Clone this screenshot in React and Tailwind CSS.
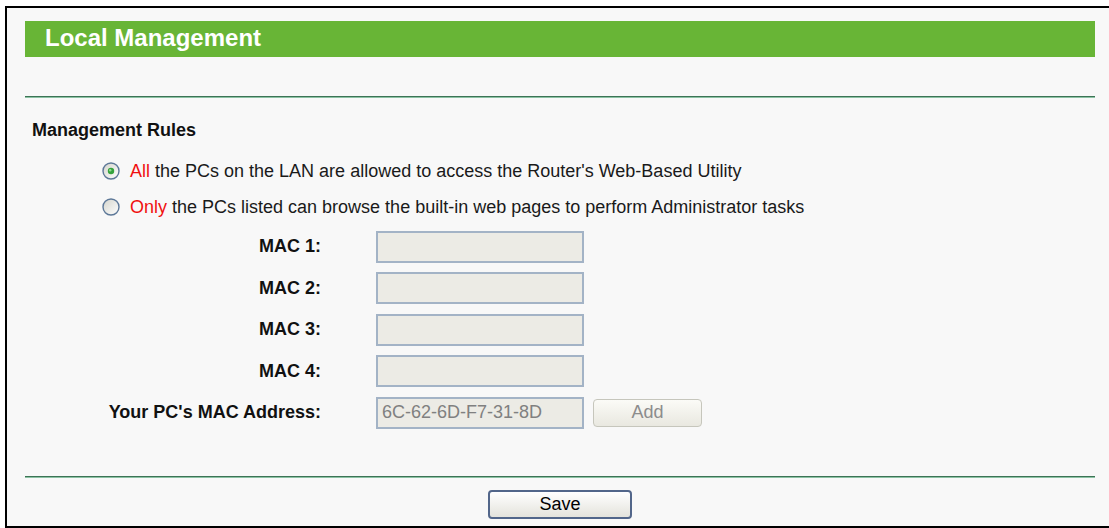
import React from 'react';

const font = { fontFamily: '"Liberation Sans", Arial, sans-serif' };

// little XP-style radio, drawn
const Radio = ({ checked }) => (
  <svg width="18" height="18" viewBox="0 0 18 18" className="shrink-0">
    <defs>
      <linearGradient id={checked ? 'rg1' : 'rg2'} x1="0" y1="0" x2="1" y2="1">
        <stop offset="0" stopColor="#d4d4cc" />
        <stop offset="1" stopColor="#ffffff" />
      </linearGradient>
    </defs>
    <circle cx="9" cy="9" r="8" fill={`url(#${checked ? 'rg1' : 'rg2'})`} stroke="#5d7898" strokeWidth="1.4" />
    {checked && (
      <>
        <circle cx="9" cy="9" r="3.2" fill="#35a23c" />
        <circle cx="8.2" cy="8.2" r="1.2" fill="#8fdc8f" />
      </>
    )}
  </svg>
);

const Divider = ({ className }) => (
  <div className={`ml-[18px] w-[1070px] h-[2px] border-t border-b border-t-[#3d7356] border-b-[#8cc3a4] ${className}`} />
);

const MacRow = ({ label, value, withAdd }) => (
  <div className="flex items-center h-[41.5px]">
    <div className="w-[314px] text-right font-bold text-[18px] text-[#111]">{label}</div>
    <div className="ml-[55px] w-[208px] h-[32px] border-2 border-[#a3b3c6] bg-[#ecebe5] flex items-center pl-[4px] text-[18px] text-[#808080]">
      {value}
    </div>
    {withAdd && (
      <div className="ml-[9px] w-[109px] h-[28px] rounded-[4px] border border-[#c6c6bc] bg-gradient-to-b from-[#fbfbf7] to-[#e9e8e0] flex items-center justify-center text-[18px] text-[#8c8c8c]">
        Add
      </div>
    )}
  </div>
);

export default function App() {
  return (
    <div className="min-h-screen bg-white pt-[6px] pl-[5px]" style={font}>
      <div className="h-[522px] border-l-2 border-t-2 border-b-2 border-black bg-[#f8f8f8]">
        {/* title bar */}
        <div className="mt-[13px] ml-[18px] w-[1070px] h-[36px] bg-[#68b536] flex items-center pl-[20px]">
          <span className="text-white font-bold text-[24px] leading-[36px] -mt-[2px]">Local Management</span>
        </div>

        <Divider className="mt-[39px]" />

        <div className="mt-[22px] ml-[25px] font-bold text-[18px] leading-[20px] text-[#111]">Management Rules</div>

        <div className="mt-[13px] ml-[95px] h-[36px] flex items-center text-[18px] text-[#1a1a1a]">
          <Radio checked />
          <span className="ml-[10px]">
            <span className="text-[#f01010]">All</span> the PCs on the LAN are allowed to access the Router's Web-Based Utility
          </span>
        </div>
        <div className="ml-[95px] h-[36px] flex items-center text-[18px] text-[#1a1a1a]">
          <Radio />
          <span className="ml-[10px]">
            <span className="text-[#f01010]">Only</span> the PCs listed can browse the built-in web pages to perform Administrator tasks
          </span>
        </div>

        <div className="mt-[1px]">
          <MacRow label="MAC 1:" />
          <MacRow label="MAC 2:" />
          <MacRow label="MAC 3:" />
          <MacRow label="MAC 4:" />
          <MacRow label="Your PC's MAC Address:" value="6C-62-6D-F7-31-8D" withAdd />
        </div>

        <Divider className="mt-[42px]" />

        <div className="mt-[12px] ml-[18px] w-[1070px] flex justify-center">
          <div className="w-[144px] h-[29px] rounded-[4px] border-2 border-[#52668a] bg-gradient-to-b from-white to-[#e4e3dc] flex items-center justify-center text-[18px] text-black">
            Save
          </div>
        </div>
      </div>
    </div>
  );
}
